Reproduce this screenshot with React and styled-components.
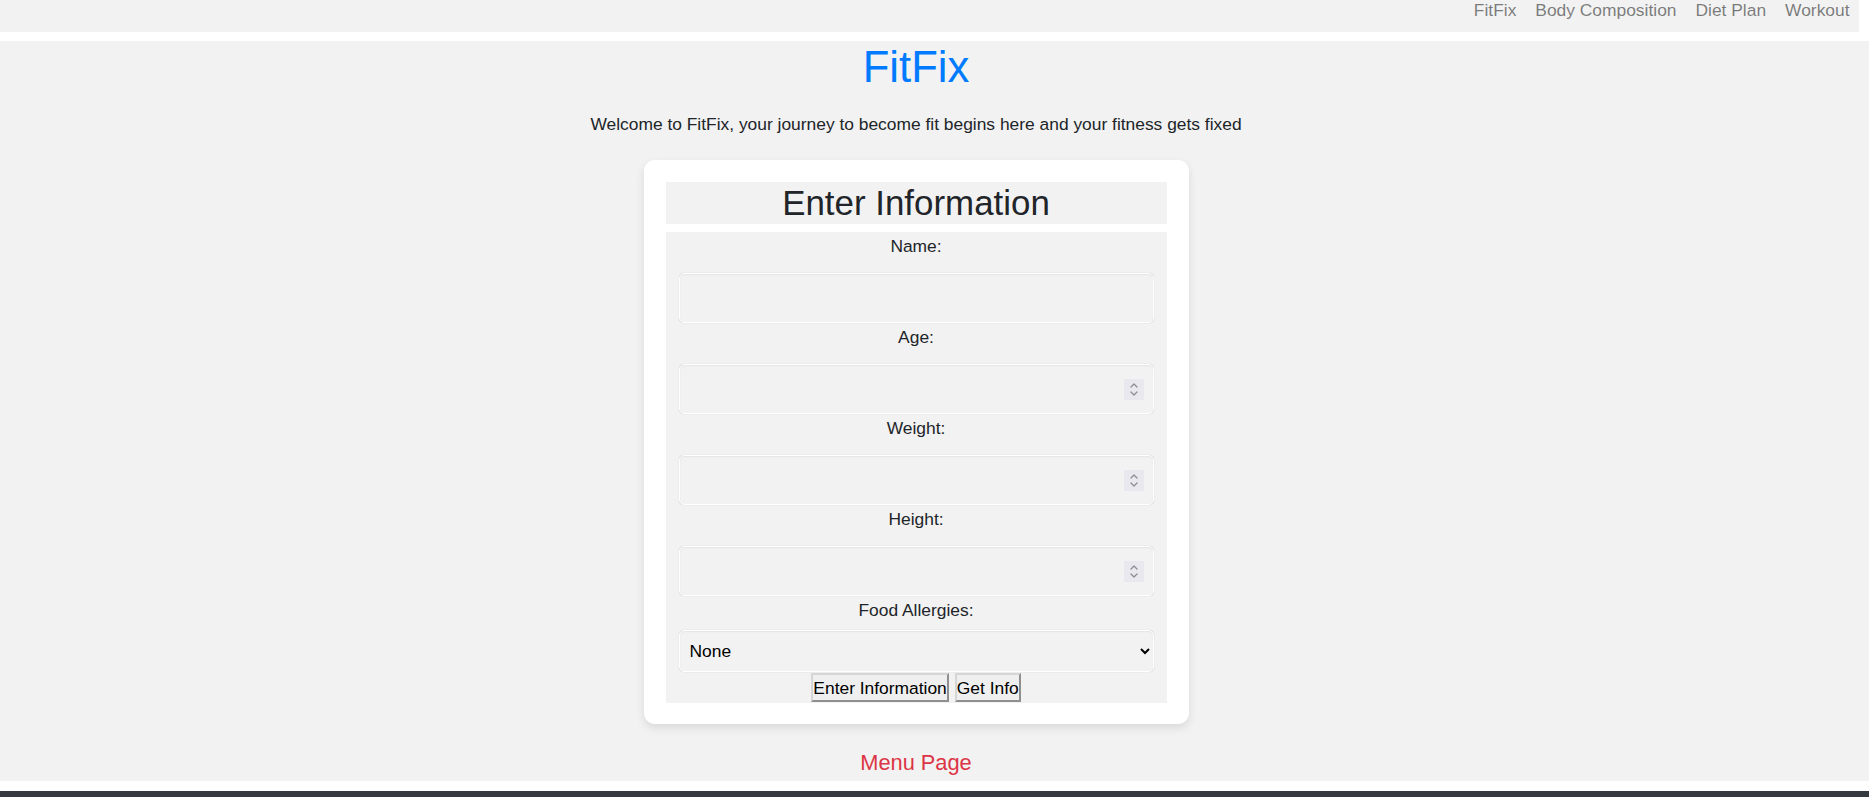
import React from 'react'
import styled, { createGlobalStyle } from 'styled-components'

const GlobalStyle = createGlobalStyle`
    html, body {
        margin: 0;
        padding: 0;
        overflow: hidden;
    }
    body {
        background: #ffffff;
        font-family: "Liberation Sans", Arial, sans-serif;
        font-size: 17.4px;
        color: #212529;
    }
    * {
        box-sizing: border-box;
    }
    input[type=number]::-webkit-inner-spin-button,
    input[type=number]::-webkit-outer-spin-button {
        -webkit-appearance: none;
        margin: 0;
    }
`

const NavBar = styled.nav`
    display: flex;
    flex-flow: row nowrap;
    justify-content: flex-end;
    align-items: flex-start;
    height: 32px;
    margin-right: 10px;
    background: #f2f2f2;
`

const NavLink = styled.a`
    padding: 0 9.5px;
    line-height: 20px;
    color: rgba(0, 0, 0, 0.5);
    text-decoration: none;
`

const Main = styled.main`
    display: flex;
    flex-flow: column nowrap;
    align-items: center;
    margin-top: 9px;
    padding: 0 37px 1px 0;
    background: #f2f2f2;
`

const Title = styled.h1`
    margin: 0 0 21px;
    font-size: 43.6px;
    font-weight: 400;
    line-height: 1.2;
    color: #007bff;
`

const Welcome = styled.p`
    margin: 0 0 26px;
    line-height: 20px;
`

const Card = styled.section`
    width: 545px;
    padding: 22px 22px 21px;
    background: #ffffff;
    border-radius: 11px;
    box-shadow: 0 4px 10px rgba(0, 0, 0, 0.1);
`

const CardHeader = styled.h2`
    margin: 0 0 8px;
    background: #f2f2f2;
    font-size: 34.9px;
    font-weight: 400;
    line-height: 42px;
    text-align: center;
    color: #212529;
`

const Form = styled.form`
    display: flex;
    flex-flow: column nowrap;
    padding: 0 13px 1px;
    background: #f2f2f2;
`

const Label = styled.label`
    margin-top: 3.5px;
    line-height: 20px;
    text-align: center;
`

const fieldStyle = `
    width: 100%;
    background: #f2f2f2;
    border: 1px solid #ffffff;
    border-radius: 5px;
    box-shadow: 0 0 1px rgba(0, 0, 0, 0.25), inset 0 1px 2px rgba(0, 0, 0, 0.06);
    font-family: "Liberation Sans", Arial, sans-serif;
    font-size: 17.4px;
    color: #000;
`

const InputWrap = styled.div`
    position: relative;
    margin-top: 17.5px;
`

const Input = styled.input`
    ${fieldStyle}
    display: block;
    height: 50px;
    padding: 0 34px 0 12px;
`

const Spinner = styled.span`
    position: absolute;
    top: 15px;
    right: 10px;
    display: flex;
    align-items: center;
    justify-content: center;
    width: 20px;
    height: 21px;
    background: #e9e8ee;
    pointer-events: none;
`

const Select = styled.select`
    ${fieldStyle}
    height: 42px;
    margin-top: 10.5px;
    padding: 0 6px;
`

const ButtonRow = styled.div`
    display: flex;
    flex-flow: row nowrap;
    justify-content: center;
    gap: 6px;
    margin-top: 1px;
`

const Button = styled.button`
    height: 29px;
    padding: 0;
    background: #efefef;
    border-width: 2px;
    border-style: solid;
    border-color: #d6d6d6 #8f8f8f #8f8f8f #d6d6d6;
    border-radius: 0;
    font-family: "Liberation Sans", Arial, sans-serif;
    font-size: 17.4px;
    line-height: 20px;
    color: #000;
`

const MenuLink = styled.a`
    margin-top: 22.5px;
    font-size: 21.8px;
    line-height: 32.7px;
    color: #dc3545;
    text-decoration: none;
`

const Footer = styled.footer`
    height: 56px;
    margin-top: 10px;
    background: #343a40;
`

const SpinIcon = () => (
    <svg width="10" height="15" viewBox="0 0 10 15" fill="none" stroke="#8d8c96" strokeWidth="1.3" strokeLinecap="round" strokeLinejoin="round">
        <path d="M2 5 L5 2 L8 5" />
        <path d="M2 10 L5 13 L8 10" />
    </svg>
)

const navItems = ['FitFix', 'Body Composition', 'Diet Plan', 'Workout']

const fields = [
    {label: 'Name:', type: 'text'},
    {label: 'Age:', type: 'number'},
    {label: 'Weight:', type: 'number'},
    {label: 'Height:', type: 'number'},
]

const App = () => {
    return (
        <>
            <GlobalStyle />
            <NavBar>
                {navItems.map(item => (
                    <NavLink key={item} href="#">{item}</NavLink>
                ))}
            </NavBar>
            <Main>
                <Title>FitFix</Title>
                <Welcome>Welcome to FitFix, your journey to become fit begins here and your fitness gets fixed</Welcome>
                <Card>
                    <CardHeader>Enter Information</CardHeader>
                    <Form onSubmit={e => e.preventDefault()}>
                        {fields.map(field => (
                            <React.Fragment key={field.label}>
                                <Label>{field.label}</Label>
                                <InputWrap>
                                    <Input type={field.type} />
                                    {field.type === 'number' && (
                                        <Spinner><SpinIcon /></Spinner>
                                    )}
                                </InputWrap>
                            </React.Fragment>
                        ))}
                        <Label>Food Allergies:</Label>
                        <Select defaultValue="none">
                            <option value="none">None</option>
                            <option value="nuts">Nuts</option>
                            <option value="dairy">Dairy</option>
                            <option value="gluten">Gluten</option>
                        </Select>
                        <ButtonRow>
                            <Button type="submit">Enter Information</Button>
                            <Button type="button">Get Info</Button>
                        </ButtonRow>
                    </Form>
                </Card>
                <MenuLink href="#">Menu Page</MenuLink>
            </Main>
            <Footer />
        </>
    )
}

export default App
